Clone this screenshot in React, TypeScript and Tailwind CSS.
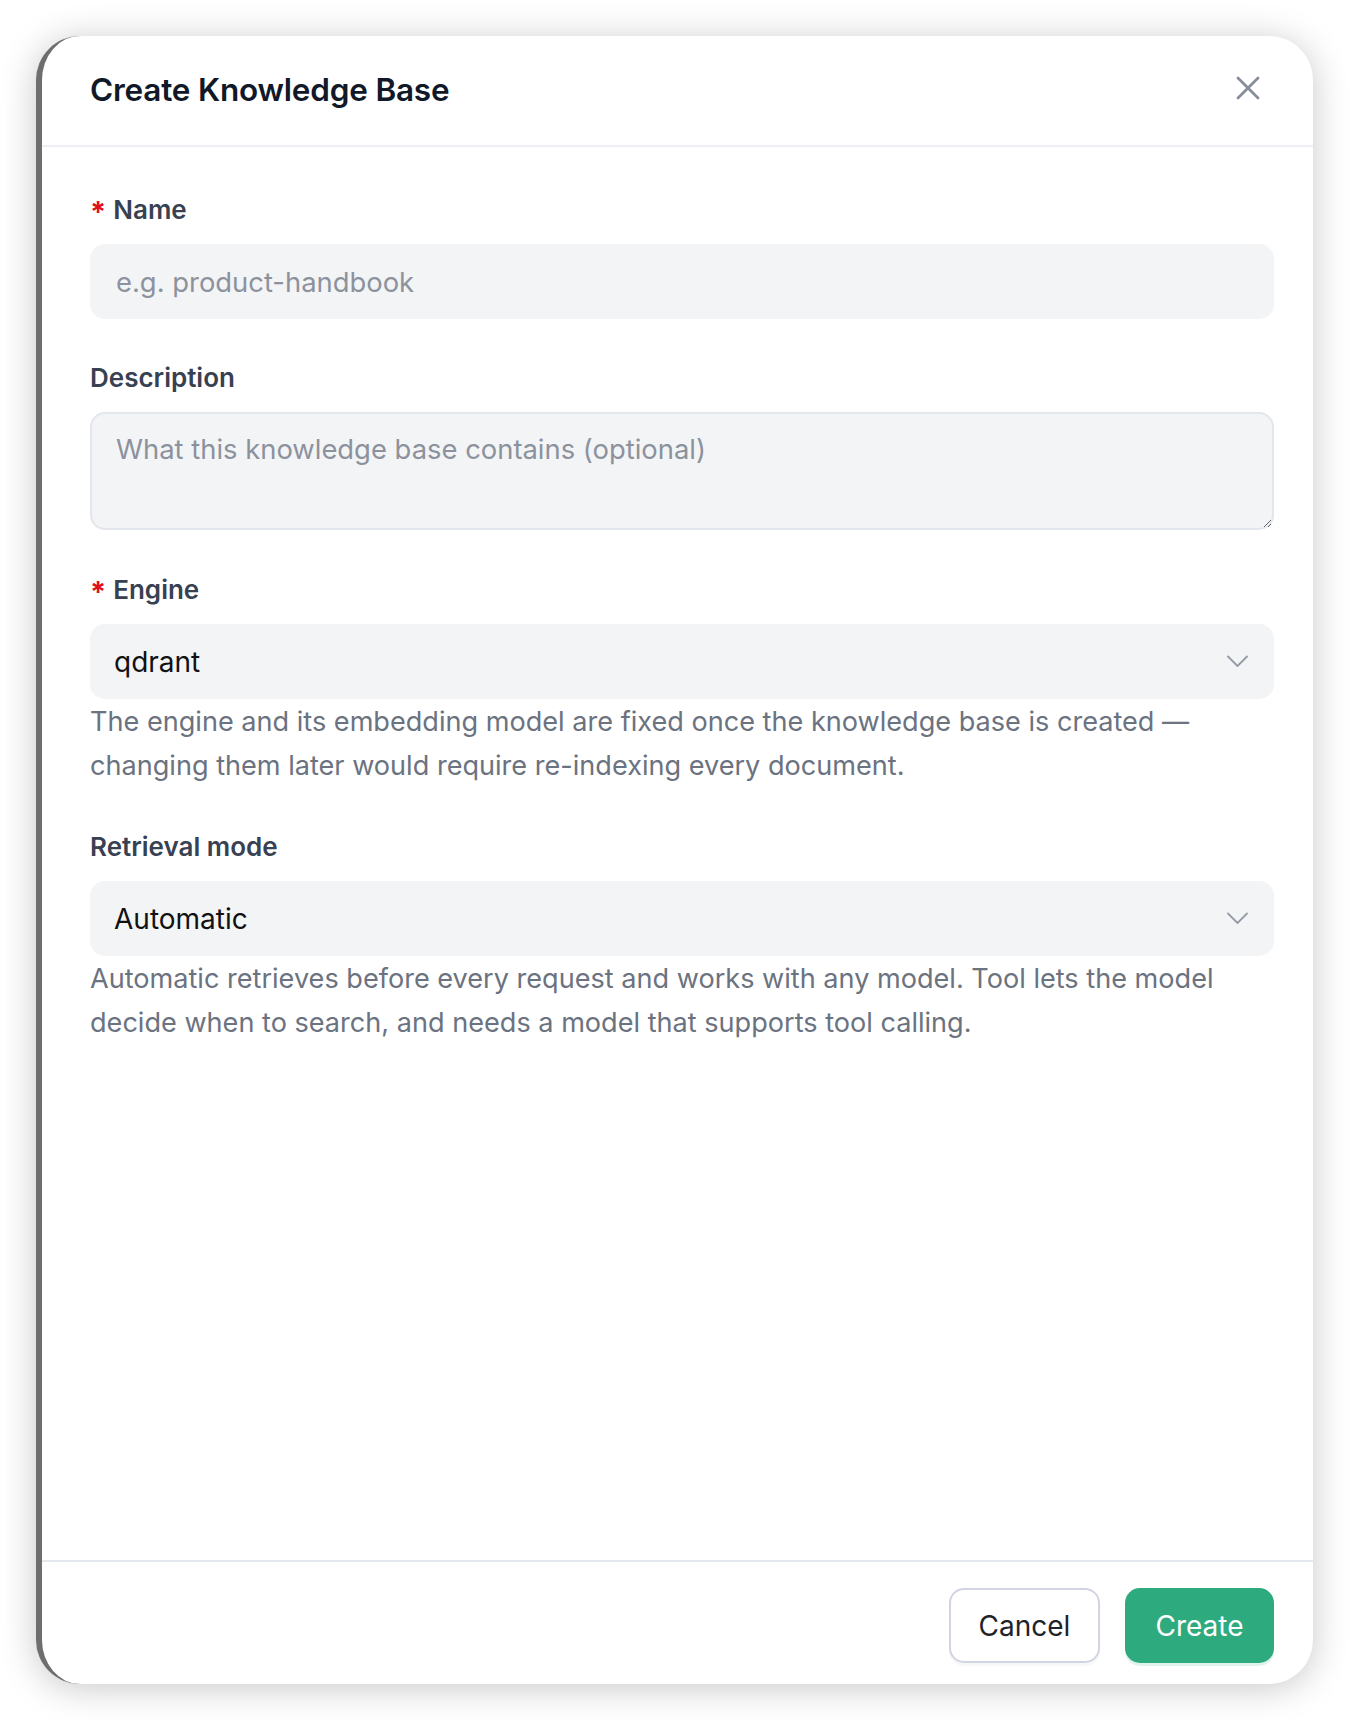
import React from "react";

function Chevron() {
  return (
    <svg width="21" height="13" viewBox="0 0 21 13" fill="none" className="shrink-0">
      <polyline points="1,1.5 10.5,11 20,1.5" stroke="#959ba6" strokeWidth="1.8" strokeLinecap="round" strokeLinejoin="round" />
    </svg>
  );
}

function Label({ text, required }: { text: string; required?: boolean }) {
  return (
    <div className="flex items-center gap-[7px] h-[36px] text-[26px] leading-[36px] font-semibold text-[#374151]">
      {required && <span className="relative top-[2px] text-[#e0101a] text-[29px] font-bold leading-[36px]">*</span>}
      <span>{text}</span>
    </div>
  );
}

function FakeSelect({ value }: { value: string }) {
  return (
    <div className="mt-4 h-[75px] rounded-[15px] bg-[#f3f4f6] flex items-center justify-between pl-[24px] pr-[26px]">
      <span className="text-[28px] text-[#111111]">{value}</span>
      <Chevron />
    </div>
  );
}

export default function App() {
  return (
    <div className="min-h-[1720px] w-[1350px] bg-white p-[36px] pr-[37px] pb-[36px] font-['Inter','Liberation_Sans',sans-serif]">
      {/* Modal card */}
      <div className="h-[1648px] flex flex-col rounded-[44px] bg-white border-l-[6px] border-[#6e6e6e] shadow-[0_4px_36px_rgba(0,0,0,0.22)] overflow-hidden">
        {/* Header */}
        <div className="h-[111px] shrink-0 flex items-center justify-between pl-[48px] pr-[53px] border-b-2 border-[#eef0f5]">
          <h2 className="text-[31.5px] font-semibold text-[#111827] tracking-[-0.2px] -mt-[1px]">Create Knowledge Base</h2>
          <svg width="24" height="24" viewBox="0 0 24 24" fill="none" className="-mt-[6px]">
            <path d="M2 2L22 22M22 2L2 22" stroke="#878d99" strokeWidth="2.8" strokeLinecap="round" />
          </svg>
        </div>

        {/* Body */}
        <div className="flex-1 pl-[48px] pr-[39px] pt-[45px]">
          <Label text="Name" required />
          <input
            className="mt-4 w-full h-[75px] rounded-[15px] bg-[#f3f4f6] px-[26px] text-[27.4px] outline-none placeholder:text-[#8c929d]"
            placeholder="e.g. product-handbook"
          />

          <div className="mt-[41px]">
            <Label text="Description" />
          </div>
          <textarea
            className="mt-4 block w-full h-[118px] rounded-[15px] bg-[#f3f4f6] border-2 border-[#e3e6ec] px-[24px] py-[15px] text-[27.4px] leading-[40px] outline-none placeholder:text-[#8c929d]"
            placeholder="What this knowledge base contains (optional)"
          />

          <div className="mt-[42px]">
            <Label text="Engine" required />
          </div>
          <FakeSelect value="qdrant" />
          <p className="mt-[1px] text-[27.1px] leading-[44px] text-[#6b7280]">
            The engine and its embedding model are fixed once the knowledge base is created —
            changing them later would require re-indexing every document.
          </p>

          <div className="mt-[41px]">
            <Label text="Retrieval mode" />
          </div>
          <FakeSelect value="Automatic" />
          <p className="mt-[1px] text-[27.1px] leading-[44px] text-[#6b7280]">
            Automatic retrieves before every request and works with any model. Tool lets the model
            decide when to search, and needs a model that supports tool calling.
          </p>
        </div>

        {/* Footer */}
        <div className="shrink-0 border-t-2 border-[#e5e8ee] flex justify-end gap-[25px] pr-[39px] pt-[26px] pb-[21px]">
          <button className="h-[75px] w-[151px] rounded-[15px] border-2 border-[#d0d5e1] bg-white text-[28px] text-[#1f2329] shadow-[0_3px_0_rgba(0,0,0,0.03)]">
            Cancel
          </button>
          <button className="h-[75px] w-[149px] rounded-[15px] bg-[#2eab7e] text-[28px] text-white shadow-[0_3px_0_rgba(46,171,126,0.15)]">
            Create
          </button>
        </div>
      </div>
    </div>
  );
}
